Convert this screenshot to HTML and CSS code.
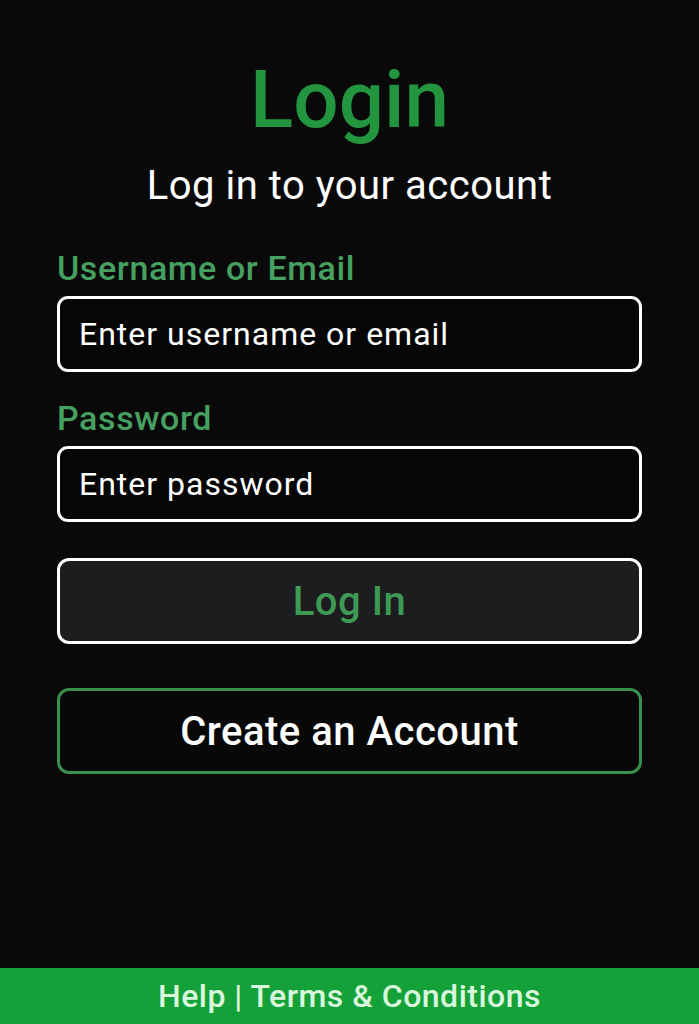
FILE: index.html
```html
<!DOCTYPE html>
<html lang="en">
<head>
<meta charset="utf-8">
<title>Login</title>
<link rel="stylesheet" href="styles.css">
</head>
<body>
<div class="page">
  <main class="login">
    <h1 class="title">Login</h1>
    <p class="subtitle">Log in to your account</p>
    <form class="form">
      <label class="label" for="user">Username or Email</label>
      <div class="field"><span class="placeholder">Enter username or email</span></div>
      <label class="label pw" for="pw">Password</label>
      <div class="field"><span class="placeholder">Enter password</span></div>
      <div class="btn btn-login">Log In</div>
      <div class="btn btn-create">Create an Account</div>
    </form>
  </main>
  <footer class="footer">Help | Terms &amp; Conditions</footer>
</div>
</body>
</html>
```
FILE: styles.css
```css
html, body {
  margin: 0;
  padding: 0;
  background: #0a0909;
}
.page {
  width: 699px;
  height: 1024px;
  display: flex;
  flex-direction: column;
  font-family: Roboto, "Liberation Sans", sans-serif;
  color: #ffffff;
}
.login {
  flex: 1;
  padding: 0 57px;
  display: flex;
  flex-direction: column;
}
.title {
  margin: 55px 0 0;
  font-size: 80px;
  font-weight: 500;
  line-height: 90px;
  text-align: center;
  color: #23953f;
  letter-spacing: 0;
}
.subtitle {
  margin: 16px 0 0;
  font-size: 40px;
  line-height: 50px;
  text-align: center;
  letter-spacing: 0.5px;
}
.form {
  display: flex;
  flex-direction: column;
  margin-top: 37px;
}
.label {
  display: block;
  font-size: 34px;
  font-weight: 500;
  line-height: 40px;
  color: #46a060;
  margin-bottom: 8px;
  letter-spacing: 0.6px;
}
.label.pw {
  margin-top: 26px;
}
.field {
  box-sizing: border-box;
  height: 76px;
  border: 3px solid #ffffff;
  border-radius: 11px;
  background: #060606;
  display: flex;
  align-items: center;
  padding: 0 19px;
}
.placeholder {
  font-size: 32px;
  letter-spacing: 1px;
}
.btn {
  box-sizing: border-box;
  height: 86px;
  border-radius: 12px;
  display: flex;
  align-items: center;
  justify-content: center;
  font-size: 40px;
  font-weight: 500;
  letter-spacing: 0.5px;
}
.btn-login {
  margin-top: 36px;
  border: 3px solid #ffffff;
  background: #1d1d1f;
  color: #3d9a55;
}
.btn-create {
  margin-top: 44px;
  border: 3px solid #3a8f4e;
  background: #080808;
  color: #ffffff;
}
.footer {
  height: 56px;
  background: #15a13a;
  color: #d9f7dc;
  display: flex;
  align-items: center;
  justify-content: center;
  font-size: 32px;
  font-weight: 500;
  letter-spacing: 0.5px;
}
```
